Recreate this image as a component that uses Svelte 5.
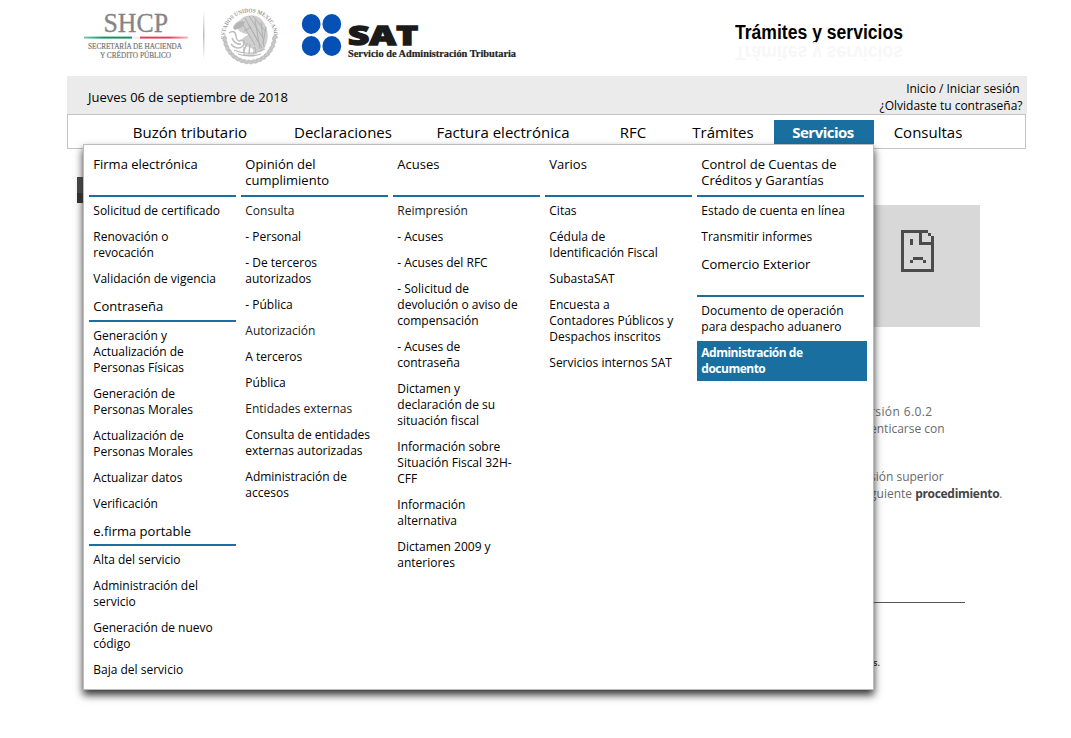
<script>
  const nav = [
    { label: 'Buzón tributario', width: 168 },
    { label: 'Declaraciones', width: 138 },
    { label: 'Factura electrónica', width: 182 },
    { label: 'RFC', width: 78 },
    { label: 'Trámites', width: 102 },
    { label: 'Servicios', width: 100, active: true },
    { label: 'Consultas', width: 108 }
  ];

  const columns = [
    [
      { title: 'Firma electrónica', size: 'tall', items: ['Solicitud de certificado', 'Renovación o\nrevocación', 'Validación de vigencia'] },
      { title: 'Contraseña', size: 'short', items: ['Generación y\nActualización de\nPersonas Físicas', 'Generación de\nPersonas Morales', 'Actualización de\nPersonas Morales', 'Actualizar datos', 'Verificación'] },
      { title: 'e.firma portable', size: 'shorter', items: ['Alta del servicio', 'Administración del\nservicio', 'Generación de nuevo\ncódigo', 'Baja del servicio'] }
    ],
    [
      { title: 'Opinión del\ncumplimiento', size: 'tall', items: ['#Consulta', '- Personal', '- De terceros\nautorizados', '- Pública', '#Autorización', 'A terceros', 'Pública', '#Entidades externas', 'Consulta de entidades\nexternas autorizadas', 'Administración de\naccesos'] }
    ],
    [
      { title: 'Acuses', size: 'tall', items: ['#Reimpresión', '- Acuses', '- Acuses del RFC', '- Solicitud de\ndevolución o aviso de\ncompensación', '- Acuses de\ncontraseña', 'Dictamen y\ndeclaración de su\nsituación fiscal', 'Información sobre\nSituación Fiscal 32H-\nCFF', 'Información\nalternativa', 'Dictamen 2009 y\nanteriores'] }
    ],
    [
      { title: 'Varios', size: 'tall', items: ['Citas', 'Cédula de\nIdentificación Fiscal', 'SubastaSAT', 'Encuesta a\nContadores Públicos y\nDespachos inscritos', 'Servicios internos SAT'] }
    ],
    [
      { title: 'Control de Cuentas de\nCréditos y Garantías', size: 'tall', items: ['Estado de cuenta en línea', 'Transmitir informes'] },
      { title: 'Comercio Exterior', size: 'tall', items: ['Documento de operación\npara despacho aduanero', '*Administración de\ndocumento'] }
    ]
  ];

  const leaves = Array.from({ length: 17 }, (_, i) => {
    const a = ((4 + i * 10.6) * Math.PI) / 180;
    return { x: 34.5 + 25 * Math.cos(a), y: 36 + 26 * Math.sin(a), r: 94 + i * 10.6 };
  });
</script>

<div class="page">
  <header>
    <svg class="shcp" width="135" height="76" viewBox="0 0 135 76">
      <defs>
        <linearGradient id="rule" x1="0" x2="0" y1="0" y2="1">
          <stop offset="0" stop-color="#fff" /><stop offset=".5" stop-color="#bbb" /><stop offset="1" stop-color="#fff" />
        </linearGradient>
        <linearGradient id="green"><stop offset="0" stop-color="#7cc9ab" /><stop offset=".4" stop-color="#129464" /></linearGradient>
        <linearGradient id="red"><stop offset=".6" stop-color="#e2405a" /><stop offset="1" stop-color="#f5b5bf" /></linearGradient>
      </defs>
      <text x="33.5" y="32" font-size="26.5" textLength="64.5" lengthAdjust="spacingAndGlyphs" fill="#858585" stroke="#858585" stroke-width=".3">SHCP</text>
      <rect x="14" y="36.6" width="48" height="2" fill="url(#green)" />
      <rect x="62" y="36.6" width="8" height="2" fill="#eee" />
      <rect x="70" y="36.6" width="48" height="2" fill="url(#red)" />
      <text x="18" y="49" font-size="8" textLength="94" lengthAdjust="spacingAndGlyphs" fill="#777" stroke="#777" stroke-width=".2">SECRETARÍA DE HACIENDA</text>
      <text x="30" y="57.5" font-size="8" textLength="71" lengthAdjust="spacingAndGlyphs" fill="#777" stroke="#777" stroke-width=".2">Y CRÉDITO PÚBLICO</text>
      <rect x="133" y="10" width="1.5" height="50" fill="url(#rule)" />
    </svg>
    <svg class="seal" width="70" height="76" viewBox="0 0 70 76">
      <path id="arc" d="M10.2 40 A24.5 24.5 0 1 1 58.8 40" fill="none" />
      <text font-size="5.8" font-weight="bold" fill="#999"><textPath href="#arc" startOffset="1" textLength="81" lengthAdjust="spacingAndGlyphs">ESTADOS UNIDOS MEXICANOS</textPath></text>
      {#each leaves as l}
        <ellipse cx={l.x} cy={l.y} rx="3" ry="1.7" fill="#c9c9c9" stroke="#b4b4b4" stroke-width=".6" transform="rotate({l.r + 20} {l.x} {l.y})" />
      {/each}
      <path d="M27 18 C33 14 42 14 47 20 C53 27 55 37 50 47 C48 52 43 54 40 50 L34 47 C28 46 26 42 28 38 L34 34 C29 34 24 32 22 28 L18 28 C19 22 24 22 27 18Z" fill="#cfcfcf" />
      <path d="M30 18 L44 43 M34 16 L48 38 M38 16 L51 32 M27 23 L40 45 M46 22 L49 47 M40 20 L45 49 M33 24 L47 48 M29 31 L36 27 M51 27 L48 44" stroke="#b0b0b0" stroke-width="1" fill="none" />
      <path d="M18 28 Q23 19 30 22 L27 27 L20 30 Z" fill="#b4b4b4" />
      <path d="M14 33 Q20 29 21 36 T27 40 Q31 41 28 46 Q22 51 16 44 M17 38 Q20 45 26 44 M32 43 L28 53 M35 44 L34 54 M40 47 L41 54" fill="none" stroke="#bcbcbc" stroke-width="1.5" />
      <path d="M19 50 Q34 57 50 49 M23 54 Q34 58 46 54 M29 47 V55 H39 V47" fill="none" stroke="#bababa" stroke-width="1.2" />
    </svg>
    <svg class="sat" width="240" height="76" viewBox="0 0 240 76">
      <g fill="#0450b4">
        <ellipse cx="21.2" cy="24" rx="9.4" ry="10" /><ellipse cx="41.8" cy="24" rx="9.4" ry="10" />
        <ellipse cx="21.2" cy="46" rx="9.4" ry="10" /><ellipse cx="41.8" cy="46" rx="9.4" ry="10" />
      </g>
      <text class="mark" x="58" y="44.9" font-size="26" textLength="70" lengthAdjust="spacingAndGlyphs" fill="#1b1b1b" stroke="#1b1b1b" stroke-width="1.3">SAT</text>
      <text class="tag" x="58" y="57.4" font-size="10" textLength="168" lengthAdjust="spacingAndGlyphs" fill="#222" stroke="#222" stroke-width=".2">Servicio de Administración Tributaria</text>
    </svg>
    <svg class="headline" width="190" height="76" viewBox="0 0 190 76">
      <text x="5" y="39" font-size="19.6" textLength="168" lengthAdjust="spacingAndGlyphs" fill="#000">Trámites y servicios</text>
      <text aria-hidden="true" x="5" y="-46" transform="scale(1 -1)" font-size="19.6" textLength="168" lengthAdjust="spacingAndGlyphs" fill="#f7f7f7">Trámites y servicios</text>
    </svg>
  </header>

  <div class="bar">
    <span class="date">Jueves 06 de septiembre de 2018</span>
    <div class="session"><span class="login">Inicio / Iniciar sesión</span><span>¿Olvidaste tu contraseña?</span></div>
  </div>

  <nav>
    {#each nav as n}
      <span class:active={n.active} style="width:{n.width}px">{n.label}</span>
    {/each}
  </nav>

  <main>
    <div class="strip"></div>
    <div class="side">
      <div class="missing">
        <svg width="33" height="42" viewBox="0 0 33 42" shape-rendering="crispEdges" fill="#4b4b4b">
          <path d="M0 0H27V3H0ZM0 3H3V42H0ZM3 39H33V42H3ZM30 6H33V39H30ZM18 3H21V15H18ZM21 12H30V15H21ZM27 3H30V6H27Z" />
          <path d="M9 9H12V15H9ZM12 27H22V30H12ZM9 30H12V33H9ZM22 30H25V33H22Z" />
        </svg>
      </div>
      <p class="first"><span>rsión 6.0.2</span><br />enticarse con</p>
      <p class="second">sión superior<br />guiente <b>procedimiento</b>.</p>
      <hr />
      <small>s.</small>
    </div>
  </main>

  <div class="menu">
    {#each columns as sections}
      <div class="col">
        {#each sections as s}
          <h3 class={s.size}>{s.title}</h3>
          <ul>
            {#each s.items as item}
              <li class:group={item[0] === '#'} class:selected={item[0] === '*'}>{item.replace(/^[#*]/, '')}</li>
            {/each}
          </ul>
        {/each}
      </div>
    {/each}
  </div>
</div>

<style>
  :global(body) { margin: 0; background: #fff; }
  .page { position: relative; width: 1071px; height: 738px; overflow: hidden; font-family: 'Open Sans', sans-serif; color: #000; }
  header { display: flex; height: 76px; padding-left: 70px; }
  header svg { flex: none; overflow: visible; }
  .shcp { font-family: 'Liberation Serif', serif; }
  .seal { margin-left: 10px; font-family: 'Liberation Serif', serif; }
  .sat { margin-left: 5px; }
  .mark { font-family: 'Open Sans', sans-serif; font-weight: 800; }
  .tag { font-family: 'Liberation Serif', serif; font-weight: bold; }
  .headline { margin-left: 200px; font-family: 'Liberation Sans', sans-serif; font-weight: bold; }
  .bar { display: flex; justify-content: space-between; box-sizing: border-box; width: 960px; height: 38px; margin-left: 67px; padding: 4px 4.5px 0 21px; background: #ebebeb; font-size: 13px; line-height: 17px; }
  .date { padding-top: 9px; }
  .session { display: flex; flex-direction: column; align-items: flex-end; font-size: 12px; }
  .login { padding-right: 3px; }
  nav { display: flex; box-sizing: border-box; width: 959px; height: 35px; margin-left: 67px; padding: 5px 0 0 38px; border: 1px solid #c4c4c4; font-size: 15px; line-height: 24px; text-align: center; }
  nav span { box-sizing: border-box; flex: none; height: 24px; padding-top: 1px; line-height: 23px; white-space: nowrap; }
  nav .active { background: #196f9f; color: #fff; font-weight: 700; letter-spacing: -.5px; padding-right: 2px; }
  main { display: flex; padding-left: 77px; }
  .strip { width: 10px; height: 26px; margin-top: 28px; background: linear-gradient(#484848 62%, #303030 62%); }
  .side { width: 200px; margin: 56px 0 0 783px; color: #6a6a6a; font-size: 12px; line-height: 17px; }
  .missing { box-sizing: border-box; width: 110px; height: 122px; padding: 25px 0 0 31px; background: #d8d8d8; }
  .missing svg { display: block; }
  p { margin: 0; white-space: nowrap; }
  .first { padding-top: 76px; }
  .first span { letter-spacing: .4px; }
  .second { padding-top: 31px; }
  b { color: #444; font-weight: 700; letter-spacing: -.3px; }
  hr { width: 95px; height: 1px; margin: 100px 0 0; border: 0; background: #555; }
  small { display: block; margin-top: 51px; padding-left: 3px; font-size: 9px; font-weight: 600; color: #222; }
  .menu { position: absolute; left: 83px; top: 144px; display: flex; gap: 5px; box-sizing: border-box; width: 791px; height: 546px; padding: 4px 5px; border: 1px solid #bbb; background: #fff; box-shadow: 0 5px 8px 0 #333; }
  .col { flex: none; width: 147px; }
  .col:last-child { width: 170px; }
  h3 { box-sizing: border-box; margin: 0; padding: 7px 0 0 4.3px; border-bottom: 2px solid #196f9f; font-size: 13px; line-height: 16px; font-weight: 400; white-space: pre; }
  .col:last-child h3 { width: 167px; }
  .tall { height: 48px; }
  .short { height: 31px; }
  .shorter { height: 30px; }
  ul { margin: 0; padding: 0; list-style: none; }
  li { position: relative; top: 2px; margin-bottom: 2px; padding: 4px 4.3px; font-size: 12px; line-height: 16px; white-space: pre; }
  .group { color: #1a1a1a; }
  .selected { background: #196f9f; color: #fff; font-weight: 700; letter-spacing: -.5px; }
</style>
